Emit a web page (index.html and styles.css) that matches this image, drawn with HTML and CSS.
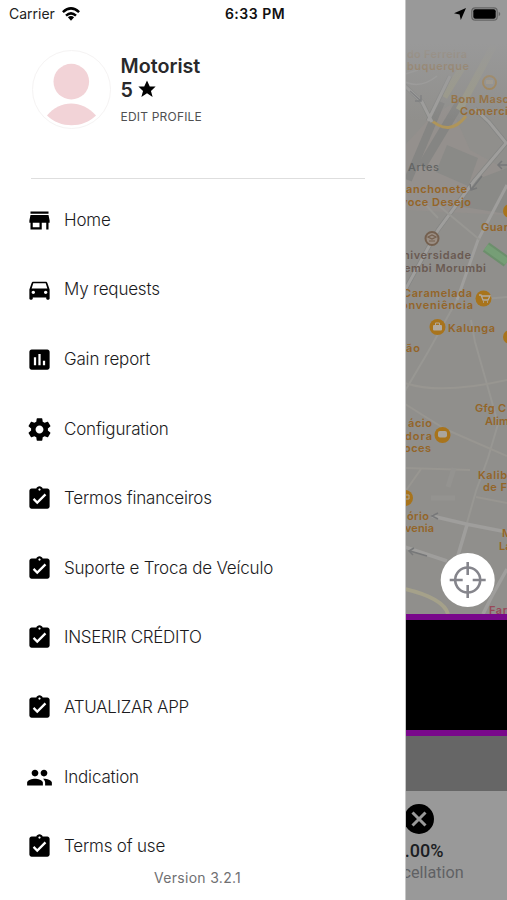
FILE: index.html
```html
<!DOCTYPE html>
<html lang="en">
<head>
<meta charset="utf-8">
<title>Motorist menu</title>
<link rel="stylesheet" href="styles.css">
</head>
<body>
<svg class="defs" aria-hidden="true">
  <symbol id="clip" viewBox="0 0 24 24"><path fill-rule="evenodd" d="M19 3h-4.18C14.4 1.84 13.3 1 12 1s-2.4.84-2.82 2H5c-1.1 0-2 .9-2 2v14c0 1.1.9 2 2 2h14c1.1 0 2-.9 2-2V5c0-1.1-.9-2-2-2zm-7 0c.55 0 1 .45 1 1s-.45 1-1 1-1-.45-1-1 .45-1 1-1zm-2 14l-4-4 1.41-1.41L10 14.17l6.59-6.59L18 9l-8 8z"/></symbol>
  <symbol id="store" viewBox="0 0 24 24"><path fill-rule="evenodd" d="M20 4H4v2h16V4zm1 10v-2l-1-5H4l-1 5v2h1v6h10v-6h4v6h2v-6h1zm-9 4H6v-4h6v4z"/></symbol>
  <symbol id="car" viewBox="0 0 24 24"><path fill-rule="evenodd" d="M18.92 6.01C18.72 5.42 18.16 5 17.5 5h-11c-.66 0-1.21.42-1.42 1.01L3 12v8c0 .55.45 1 1 1h1c.55 0 1-.45 1-1v-1h12v1c0 .55.45 1 1 1h1c.55 0 1-.45 1-1v-8l-2.08-5.99zM6.5 16c-.83 0-1.5-.67-1.5-1.5S5.67 13 6.5 13s1.5.67 1.5 1.5S7.33 16 6.5 16zm11 0c-.83 0-1.5-.67-1.5-1.5s.67-1.5 1.5-1.5 1.5.67 1.5 1.5-.67 1.5-1.5 1.5zM5 11l1.5-4.5h11L19 11H5z"/></symbol>
  <symbol id="chart" viewBox="0 0 24 24"><path fill-rule="evenodd" d="M19 3H5c-1.1 0-2 .9-2 2v14c0 1.1.9 2 2 2h14c1.1 0 2-.9 2-2V5c0-1.1-.9-2-2-2zM9 17H7v-7h2v7zm4 0h-2V7h2v10zm4 0h-2v-4h2v4z"/></symbol>
  <symbol id="gear" viewBox="0 0 24 24"><path fill-rule="evenodd" d="M19.43 12.98c.04-.32.07-.64.07-.98s-.03-.66-.07-.98l2.11-1.65c.19-.15.24-.42.12-.64l-2-3.46c-.12-.22-.39-.3-.61-.22l-2.49 1c-.52-.4-1.08-.73-1.69-.98l-.38-2.65C14.46 2.18 14.25 2 14 2h-4c-.25 0-.46.18-.49.42l-.38 2.65c-.61.25-1.17.59-1.69.98l-2.49-1c-.23-.09-.49 0-.61.22l-2 3.46c-.13.22-.07.49.12.64l2.11 1.65c-.04.32-.07.65-.07.98s.03.66.07.98l-2.11 1.65c-.19.15-.24.42-.12.64l2 3.46c.12.22.39.3.61.22l2.49-1c.52.4 1.08.73 1.69.98l.38 2.65c.03.24.24.42.49.42h4c.25 0 .46-.18.49-.42l.38-2.65c.61-.25 1.17-.59 1.69-.98l2.49 1c.23.09.49 0 .61-.22l2-3.46c.12-.22.07-.49-.12-.64l-2.11-1.65zM12 15.5c-1.93 0-3.5-1.57-3.5-3.5s1.57-3.5 3.5-3.5 3.5 1.57 3.5 3.5-1.57 3.5-3.5 3.5z"/></symbol>
  <symbol id="people" viewBox="0 0 24 24"><path d="M16 11c1.66 0 2.99-1.34 2.99-3S17.66 5 16 5s-3 1.34-3 3 1.34 3 3 3zm-8 0c1.66 0 2.99-1.34 2.99-3S9.66 5 8 5 5 6.34 5 8s1.34 3 3 3zm0 2c-2.33 0-7 1.17-7 3.5V19h14v-2.5c0-2.33-4.67-3.5-7-3.5zm8 0c-.29 0-.62.02-.97.05 1.16.84 1.97 1.97 1.97 3.45V19h6v-2.5c0-2.33-4.67-3.5-7-3.5z"/></symbol>
</svg>
<div class="screen">
  <aside class="drawer">
    <header class="profile">
      <svg class="avatar" viewBox="0 0 80 80">
        <circle cx="40.500" cy="40.500" r="39" fill="#fff" stroke="#f5f3f3"/>
        <circle cx="40.300" cy="32.600" r="17.800" fill="#f2d3d7"/>
        <path d="M16 66.500C29 50.500 51 50.500 65 66.500C52 79.500 29 79.500 16 66.500Z" fill="#f2d3d7"/>
      </svg>
      <div class="who">
        <div class="name">Motorist</div>
        <div class="rating">5 <svg class="star" viewBox="0 0 24 24"><path d="M12 17.800 19.500 22.500 17.300 14.500 23.500 8.800H15.700L12 .8 8.300 8.800H.5L6.700 14.500 4.500 22.500Z"/></svg></div>
        <div class="edit">EDIT PROFILE</div>
      </div>
    </header>
    <nav class="menu">
      <div class="item"><svg><use href="#store"/></svg><span>Home</span></div>
      <div class="item"><svg><use href="#car"/></svg><span>My requests</span></div>
      <div class="item"><svg><use href="#chart"/></svg><span>Gain report</span></div>
      <div class="item"><svg><use href="#gear"/></svg><span>Configuration</span></div>
      <div class="item"><svg><use href="#clip"/></svg><span>Termos financeiros</span></div>
      <div class="item"><svg><use href="#clip"/></svg><span>Suporte e Troca de Veículo</span></div>
      <div class="item caps"><svg><use href="#clip"/></svg><span>INSERIR CRÉDITO</span></div>
      <div class="item caps"><svg><use href="#clip"/></svg><span>ATUALIZAR APP</span></div>
      <div class="item"><svg><use href="#people"/></svg><span>Indication</span></div>
      <div class="item"><svg><use href="#clip"/></svg><span>Terms of use</span></div>
    </nav>
    <div class="version">Version 3.2.1</div>
  </aside>
  <main class="behind">
    <svg class="map" viewBox="406 0 101 614">
      <defs><linearGradient id="fade" x1="0" y1="0" x2="0" y2="1"><stop offset="0" stop-color="#999"/><stop offset=".36" stop-color="#999"/><stop offset="1" stop-color="#999" stop-opacity="0"/></linearGradient></defs>
      <rect x="405" width="102" height="614" fill="#908f8c"/>
      <path d="M430 118 450 105 470 150 507 170V215L405 210V145Z" fill="#94908d"/>
      <path d="M447 145 478 158 468 186 436 172ZM470 182 507 168V214L458 206Z" fill="#8a8a87"/>
      <g fill="none" stroke="#858583" stroke-width="8"><path d="M408 180 441 102"/><path d="M422 166 458 106 464 99" stroke-width="9"/></g>
      <g fill="none" stroke="#9c9a86" stroke-width="7"><path d="M444 97 462 68M459 110 494 45"/></g>
      <path d="M429 118Q449 138 466 116" fill="none" stroke="#af955a" stroke-width="3"/>
      <path d="M405 86 422 102 432 122M475 109 489 122 507 144M507 142 474 181 438 230 405 290M428 121 450 76" fill="none" stroke="#858684" stroke-width="4.500"/>
      <g fill="none" stroke="#9f9e9c" stroke-width="3">
        <path d="M405 86 422 102 432 122M475 109 489 122 507 144M507 142 474 181 438 230 405 290M428 121 450 76"/>
        <path d="M405 82Q421 89 437 76M405 74 418 70" stroke-width="1.500"/>
        <path d="M507 185 478 240 457 300"/>
        <path d="M423 202 438 218M438 205 480 240M457 300 428 352 405 391M471 320 475 342 492 402 498 424 488 458 476 491 456 562M485 299 507 297" stroke-width="2" stroke="#989793"/>
        <path d="M405 383Q440 395 507 380M405 404 445 429 507 456M405 468 470 470M421 469 405 492M476 497 507 503" stroke-width="2" stroke="#989691"/>
        <path d="M432 516 466 524 507 532M467 525 456 562M405 547 447 561M507 569 492 596 483 614" stroke-width="3.500"/>
        <path d="M448 487 454 468M431 498H455" stroke-width="5" stroke="#949390"/>
      </g>
      <path d="M405 589C422 593 444 600 448 614" fill="none" stroke="#a5a18a" stroke-width="4"/>
      <path d="M486 247 507 262" stroke="#6c8f6c" stroke-width="11"/>
      <path d="M486 247 507 262" stroke="#769e76" stroke-width="7"/>
      <g stroke="#777879" fill="none" stroke-width="1.500"><path d="M410 91 421 101M421 95V101H415M482 176 471 190M470 184 471 190 477 188M507 165H499M502 161 498 165 502 169M427 556 410 551M414 548 409 551 413 555M438 519 432 516 438 513"/></g>
      <g class="pins">
        <circle cx="489.500" cy="82.500" r="6.500"/><path d="M486 80h7v4h-7z" fill="#a79c88" stroke="none"/>
        <g stroke="#74604f"><circle cx="432" cy="238.500" r="6.500" fill="#9a8e84"/><path d="M428 237 432 235 436 237 432 239ZM429 241H435" stroke-width="1.200"/></g>
        <g fill="#a8741c" stroke="none"><circle cx="483.500" cy="298.500" r="8"/><circle cx="437.500" cy="327" r="8"/><circle cx="442.500" cy="435" r="8"/><circle cx="405" cy="498" r="8"/><circle cx="510" cy="337" r="7"/><circle cx="510" cy="211" r="7"/></g>
        <path d="M479 295h2l2 5h5l2-4h-8M483 302h1M487 302h1" stroke="#b1aaa0" stroke-width="1.300"/>
        <rect x="433" y="325" width="9" height="5.500" rx="1" fill="#b1aaa0" stroke="none"/><path d="M435.500 325v-2h4v2" stroke="#b1aaa0" stroke-width="1"/>
        <rect x="438" y="431" width="9" height="6.500" rx="2" fill="#aaa59d" stroke="none"/>
        <path d="M405 495h4v4h-4" stroke="#aaa59d" stroke-width="1"/>
      </g>
      <g class="labels">
        <text x="407" y="57.500" textLength="60">do Ferreira</text><text x="407" y="69.500" textLength="62">buquerque</text>
        <text x="451" y="102.500" textLength="58">Bom Masc</text><text x="460" y="115" textLength="48">Comerci</text>
        <text x="408" y="170.500" textLength="31" class="plain">Artes</text>
        <text x="406" y="193" textLength="61">anchonete</text><text x="401" y="205.500" textLength="70">voce Desejo</text>
        <text x="481" y="231" textLength="27">Guar</text>
        <text x="403" y="259" textLength="68" class="school">niversidade</text><text x="404" y="271.500" textLength="82" class="school">embi Morumbi</text>
        <text x="403" y="296.500" textLength="69">Caramelada</text><text x="401" y="308.500" textLength="72">onveniência</text>
        <text x="448" y="331.500" textLength="47">Kalunga</text><text x="406" y="352" textLength="14">ão</text>
        <text x="475" y="412" textLength="31">Gfg C</text><text x="485" y="425" textLength="24">Alim</text>
        <text x="408" y="427" textLength="24">ácio</text><text x="405" y="439.500" textLength="27">dora</text><text x="404" y="452" textLength="27">oces</text>
        <text x="478" y="479" textLength="29">Kalib</text><text x="483" y="491" textLength="24">de F</text>
        <text x="407" y="519.500" textLength="22">ório</text><text x="405" y="531.500" textLength="29">venia</text>
        <text x="502" y="537">M</text><text x="499" y="549.500">La</text>
        <text x="489" y="614" textLength="18" class="pharmacy">Far</text>
      </g>
      <rect x="405" width="102" height="120" fill="url(#fade)"/>
      <circle cx="467.700" cy="580" r="27" fill="#fff"/>
      <g fill="none" stroke="#85858c" stroke-width="2.600"><circle cx="467.700" cy="580" r="12.500"/><path d="M467.700 562v13M467.700 585v13M449.700 580h13M472.700 580h13"/></g>
    </svg>
    <div class="banner"></div>
    <div class="strip"></div>
    <div class="stats">
      <svg class="cross" viewBox="0 0 30 30"><circle cx="15" cy="15" r="15"/><path d="M8.500 8.500 21.500 21.500M21.500 8.500 8.500 21.500" stroke="#999" stroke-width="3"/></svg>
      <div class="percent">0.00%</div>
      <div class="caption">Cancellation</div>
    </div>
  </main>
  <div class="status">
    <div class="carrier"><span>Carrier</span><svg class="wifi" viewBox="0 0 18 14"><g fill="none" stroke="#000" stroke-width="2.500"><path d="M.9 5.200Q9-2.400 17.100 5.200M4 8.600Q9 4.100 14 8.600"/></g><path d="M5.900 10.300Q9 7.800 12.100 10.300L9 13.700Z"/></svg></div>
    <div class="time">6:33 PM</div>
    <div class="power"><svg class="arrow" viewBox="0 0 12 12"><path d="M12 0 6.800 12 5.600 6.400 0 5.200Z"/></svg><svg class="battery" viewBox="0 0 30 14"><rect x=".8" y=".8" width="25.400" height="12.400" rx="3.500" fill="none" stroke="#656565" stroke-width="1.200"/><rect x="2.300" y="2.300" width="22.400" height="9.400" rx="2"/><path d="M27.700 4.800v4.400q1.600-.8 1.600-2.200t-1.600-2.200" fill="#656565"/></svg></div>
  </div>
</div>
</body>
</html>
```
FILE: styles.css
```css
* { box-sizing: border-box; }
body { margin: 0; font-family: Inter, "Liberation Sans", sans-serif; background: #fff; }
.defs { position: absolute; width: 0; height: 0; }
.screen { position: relative; width: 507px; height: 900px; display: grid; grid-template-columns: 406px 101px; overflow: hidden; }
.drawer { display: flex; flex-direction: column; height: 900px; background: #fff; border-right: 1px solid #c6c6c6; }
.profile { display: flex; gap: 9.500px; height: 179px; margin: 0 40px 0 31px; padding-top: 49px; border-bottom: 1.500px solid #dedede; }
.avatar { width: 80px; height: 80px; flex: none; }
.who { color: #29292b; padding-top: 5px; }
.name, .rating { font-size: 19.700px; line-height: 24px; font-weight: 600; white-space: nowrap; }
.rating { display: flex; align-items: center; gap: 5px; }
.star { width: 18px; height: 18px; position: relative; top: -1px; fill: #000; }
.edit { margin-top: 7px; font-size: 12px; line-height: 16px; letter-spacing: .2px; color: #505052; white-space: nowrap; }
.menu { display: flex; flex-direction: column; margin-top: 6px; }
.item { display: flex; align-items: center; gap: 11px; height: 69.620px; padding-left: 26px; font-size: 17px; letter-spacing: -.19px; font-weight: 300; color: #1b1b1d; white-space: nowrap; }
.item svg { width: 27px; height: 27px; fill: #000; flex: none; position: relative; top: .5px; }
.caps { letter-spacing: -.3px; }
.version { margin: -13px 0 0 154px; font-size: 14px; line-height: 20px; letter-spacing: .3px; color: #707072; }
.behind { display: flex; flex-direction: column; min-width: 0; overflow: hidden; }
.map { display: block; width: 101px; height: 614px; flex: none; }
.pins { fill: none; stroke: #a67b38; stroke-width: 2; }
.labels { font-family: Inter, sans-serif; font-size: 11px; font-weight: 600; fill: #946528; }
.plain { font-weight: 500; fill: #626463; }
.school { fill: #6a5a52; }
.pharmacy { fill: #984858; }
.banner { height: 122px; background: #000; border: solid #79088b; border-width: 6px 0; flex: none; }
.strip { height: 55px; background: #666; flex: none; }
.stats { flex: 1; display: flex; flex-direction: column; align-items: center; width: 116px; margin-left: -45px; padding-top: 13px; background: #999; box-shadow: 60px 0 #999; }
.cross { width: 30px; height: 30px; }
.percent { margin-top: 6px; font: 500 18px/22px Roboto, sans-serif; color: #1c1e23; }
.caption { margin-top: 1px; font: 400 16.200px/20px Roboto, sans-serif; color: #606164; }
.status { position: absolute; inset: 0 0 auto; display: grid; grid-template-columns: 1fr auto 1fr; align-items: center; height: 27px; padding: 0 6px 0 9px; font-size: 14px; }
.carrier { display: flex; align-items: center; gap: 7px; color: #222; }
.wifi { width: 18px; height: 14px; }
.time { font-weight: 600; letter-spacing: .5px; color: #111; }
.power { display: flex; justify-content: flex-end; align-items: center; gap: 5px; }
.arrow { width: 12px; height: 12px; }
.battery { width: 30px; height: 14px; }
```
